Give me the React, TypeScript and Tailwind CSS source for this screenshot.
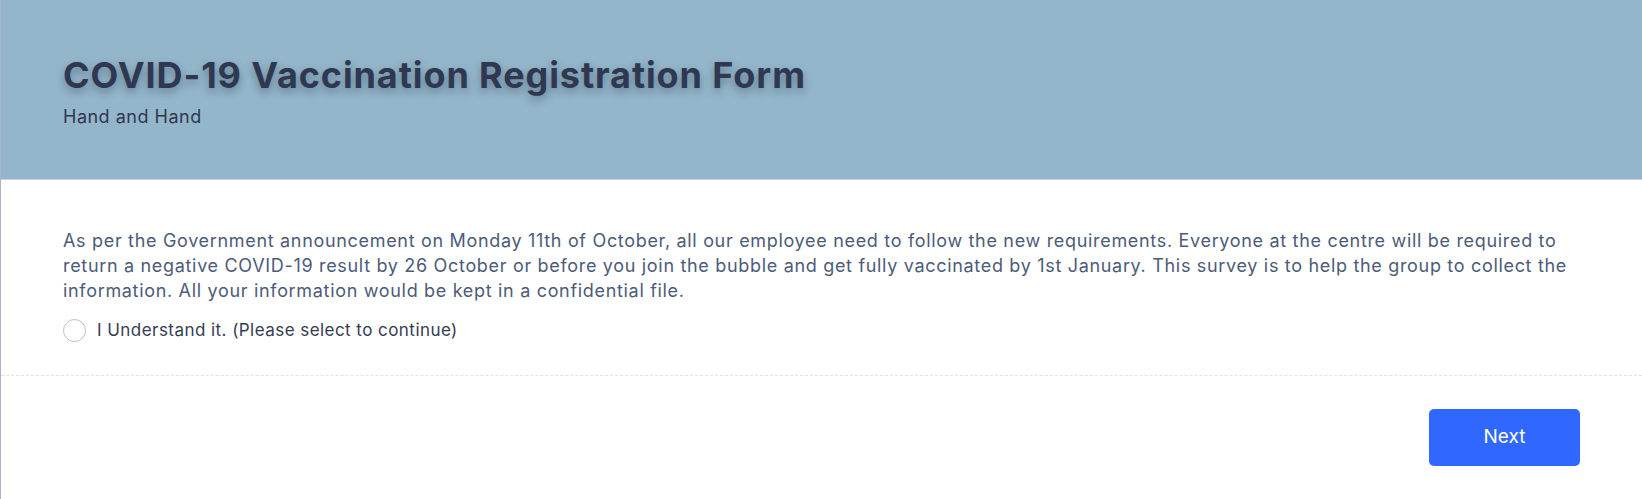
import * as React from "react";
import { useState } from "react";

const App = () => {
  const [agreed, setAgreed] = useState(false);

  return (
    <div className="min-h-[499px] w-full bg-white font-['Inter','Noto_Sans',sans-serif] border-l border-[#a9b3c9]">
      <div className="h-[180px] bg-[#94b6ca] px-[62px] pt-[53px] border-b border-[#c9d3e2]">
        <h1 className="text-[36px] font-bold leading-[44px] tracking-[0.9px] text-[#2f3850] [text-shadow:0_4px_8px_rgba(40,60,80,0.45)]">
          COVID-19 Vaccination Registration Form
        </h1>
        <p className="mt-[7px] text-[18px] leading-[26px] tracking-[0.5px] text-[#2f3850]">
          Hand and Hand
        </p>
      </div>

      <div className="px-[62px] pt-[48px] pb-[31px] border-b border-dashed border-[#dfe4ec]">
        <p className="text-[18px] leading-[25px] tracking-[0.68px] text-[#4d5b78]">
          As per the Government announcement on Monday 11th of October, all our
          employee need to follow the new requirements. Everyone at the centre
          will be required to return a negative COVID-19 result by 26 October or
          before you join the bubble and get fully vaccinated by 1st January.
          This survey is to help the group to collect the information. All your
          information would be kept in a confidential file.
        </p>
        <label className="mt-[15px] flex items-center gap-[11px] cursor-pointer">
          <span
            onClick={() => setAgreed(!agreed)}
            className="flex h-[23px] w-[23px] items-center justify-center rounded-full border border-[#b7bfcc] bg-white"
          >
            {agreed && <span className="h-[11px] w-[11px] rounded-full bg-[#3068ff]" />}
          </span>
          <span className="text-[17px] tracking-[0.45px] text-[#353c52]">
            I Understand it. (Please select to continue)
          </span>
        </label>
      </div>

      <div className="flex justify-end px-[62px] pt-[33px] pb-[33px]">
        <button className="h-[57px] w-[151px] rounded-[5px] bg-[#3068ff] text-[19px] text-white">
          Next
        </button>
      </div>
    </div>
  );
};

export default App;
